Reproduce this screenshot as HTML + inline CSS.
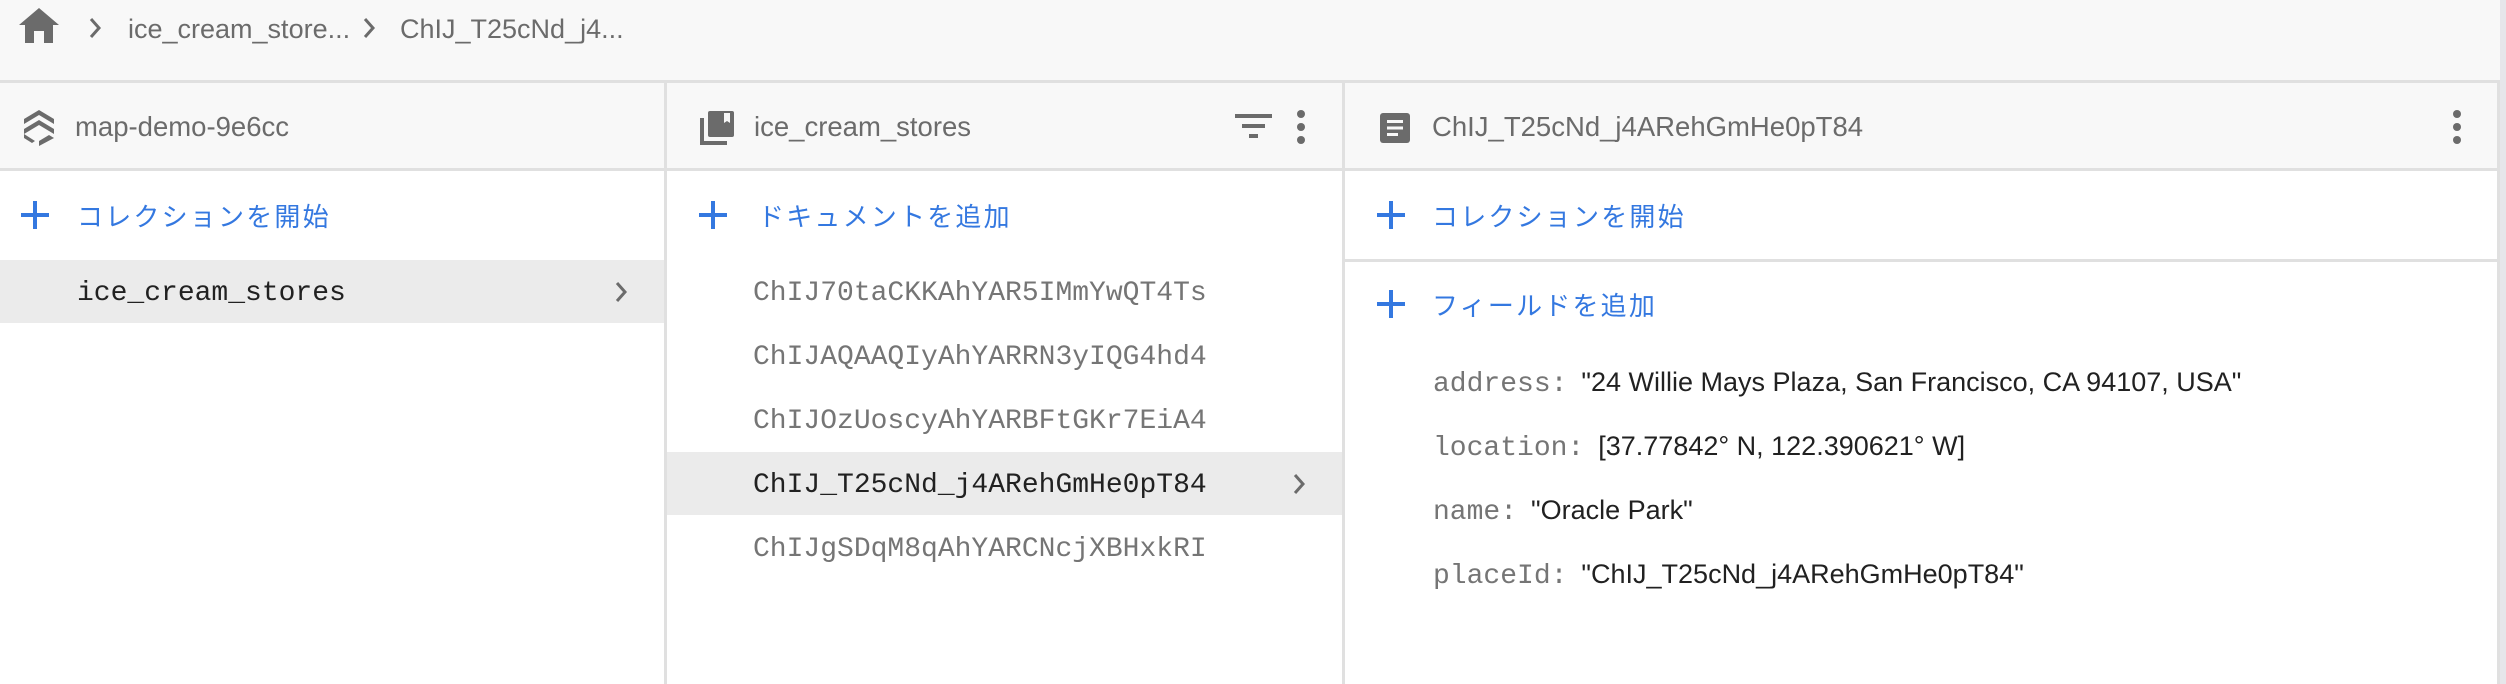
<!DOCTYPE html>
<html><head><meta charset="utf-8"><style>
*{margin:0;padding:0;box-sizing:border-box}
body{width:2506px;height:684px;overflow:hidden;background:#fff;font-family:"Liberation Sans","Noto Sans CJK JP",sans-serif;position:relative}
.a{position:absolute;white-space:nowrap}
.top{left:0;top:0;width:2500px;height:83px;background:#f8f8f8;border-bottom:3px solid #e0e0e0}
.hdr{top:83px;height:88px;background:#f8f8f8;border-bottom:3px solid #e0e0e0}
.vl{top:83px;width:3px;height:601px;background:#e0e0e0}
.gt{color:#6b6b6b;font-size:27.5px}
.blue{color:#3478e0;font-size:26px;letter-spacing:2.2px}
.mono{font-family:"Liberation Mono",monospace;font-size:28px}
.plus{width:28px;height:28px}
.plus:before{content:"";position:absolute;left:12px;top:0;width:4px;height:28px;background:#3478e0}
.plus:after{content:"";position:absolute;left:0;top:12px;width:28px;height:4px;background:#3478e0}
.sel{background:#ebebeb}
.key{color:#757575}
.val{color:#212121;font-family:"Liberation Sans",sans-serif;font-size:27px;margin-left:14px}
</style></head><body>
<div class="a top"></div>
<svg class="a" style="left:19px;top:8px" width="40" height="35" viewBox="0 0 40 35"><path d="M20 0 L40 17 H34 V35 H25 V23 H15 V35 H6 V17 H0 Z" fill="#6b6b6b"/></svg>
<svg class="a" style="left:88px;top:17px" width="14" height="22" viewBox="0 0 14 22"><path d="M3 2 L11 11 L3 20" stroke="#6b6b6b" stroke-width="3" fill="none"/></svg>
<div class="a gt" style="left:128px;top:14px;font-size:27px">ice_cream_store...</div>
<svg class="a" style="left:362px;top:17px" width="14" height="22" viewBox="0 0 14 22"><path d="M3 2 L11 11 L3 20" stroke="#6b6b6b" stroke-width="3" fill="none"/></svg>
<div class="a gt" style="left:400px;top:14px;font-size:27px">ChIJ_T25cNd_j4...</div>

<div class="a hdr" style="left:0;width:2497px"></div>
<div class="a" style="left:2497px;top:83px;width:3px;height:601px;background:#e0e0e0"></div>
<div class="a" style="left:2500px;top:0;width:6px;height:684px;background:#e6e6ea"></div>
<div class="a vl" style="left:664px"></div>
<div class="a vl" style="left:1342px"></div>

<svg class="a" style="left:23px;top:110px" width="32" height="36" viewBox="0 0 32 36"><path d="M16 0 L31 9 V14 L16 5 L1 14 V9Z M16 10 L31 19 V24 L16 15 L1 24 V19Z M31 28 L16 36 V31 L26 25Z M1 28 L9 33 L12 31 L1 24Z" fill="#6b6b6b"/></svg>
<div class="a gt" style="left:75px;top:111px">map-demo-9e6cc</div>
<svg class="a" style="left:700px;top:111px" width="34" height="34" viewBox="0 0 34 34"><path d="M0 7 H4 V30 H27 V34 H0Z" fill="#6b6b6b"/><rect x="8" y="0" width="26" height="26" rx="2" fill="#6b6b6b"/><path d="M24 2 V12 L27 10 L30 12 V2Z" fill="#f8f8f8"/></svg>
<div class="a gt" style="left:754px;top:111px">ice_cream_stores</div>
<svg class="a" style="left:1235px;top:114px" width="38" height="26" viewBox="0 0 38 26"><rect x="0" y="0" width="37" height="4" fill="#6b6b6b"/><rect x="7" y="10" width="23" height="4" fill="#6b6b6b"/><rect x="14" y="20" width="9" height="4" fill="#6b6b6b"/></svg>
<svg class="a" style="left:1295px;top:109px" width="12" height="36" viewBox="0 0 12 36"><circle cx="6" cy="5" r="4" fill="#6b6b6b"/><circle cx="6" cy="18" r="4" fill="#6b6b6b"/><circle cx="6" cy="31" r="4" fill="#6b6b6b"/></svg>
<svg class="a" style="left:1380px;top:113px" width="30" height="30" viewBox="0 0 30 30"><rect width="30" height="30" rx="3" fill="#6b6b6b"/><rect x="7" y="7" width="16" height="3" fill="#f8f8f8"/><rect x="7" y="13.5" width="16" height="3" fill="#f8f8f8"/><rect x="7" y="20" width="11" height="3" fill="#f8f8f8"/></svg>
<div class="a gt" style="left:1432px;top:111px">ChIJ_T25cNd_j4ARehGmHe0pT84</div>
<svg class="a" style="left:2451px;top:109px" width="12" height="36" viewBox="0 0 12 36"><circle cx="6" cy="5" r="4" fill="#6b6b6b"/><circle cx="6" cy="18" r="4" fill="#6b6b6b"/><circle cx="6" cy="31" r="4" fill="#6b6b6b"/></svg>

<div class="a plus" style="left:21px;top:201px"></div>
<div class="a blue" style="left:77px;top:197px">コレクションを開始</div>
<div class="a sel" style="left:0;top:260px;width:664px;height:63px"></div>
<div class="a mono" style="left:77px;top:278px;color:#212121">ice_cream_stores</div>
<svg class="a" style="left:614px;top:281px" width="14" height="22" viewBox="0 0 14 22"><path d="M3 2 L11 11 L3 20" stroke="#6b6b6b" stroke-width="3" fill="none"/></svg>

<div class="a plus" style="left:699px;top:201px"></div>
<div class="a blue" style="left:758px;top:197px">ドキュメントを追加</div>
<div class="a sel" style="left:667px;top:452px;width:675px;height:63px"></div>
<div class="a mono" style="left:753px;top:278px;color:#757575">ChIJ70taCKKAhYAR5IMmYwQT4Ts</div>
<div class="a mono" style="left:753px;top:342px;color:#757575">ChIJAQAAQIyAhYARRN3yIQG4hd4</div>
<div class="a mono" style="left:753px;top:406px;color:#757575">ChIJOzUoscyAhYARBFtGKr7EiA4</div>
<div class="a mono" style="left:753px;top:470px;color:#212121">ChIJ_T25cNd_j4ARehGmHe0pT84</div>
<div class="a mono" style="left:753px;top:534px;color:#757575">ChIJgSDqM8qAhYARCNcjXBHxkRI</div>
<svg class="a" style="left:1292px;top:473px" width="14" height="22" viewBox="0 0 14 22"><path d="M3 2 L11 11 L3 20" stroke="#6b6b6b" stroke-width="3" fill="none"/></svg>

<div class="a plus" style="left:1377px;top:201px"></div>
<div class="a blue" style="left:1432px;top:197px">コレクションを開始</div>
<div class="a" style="left:1345px;top:259px;width:1152px;height:3px;background:#e0e0e0"></div>
<div class="a plus" style="left:1377px;top:290px"></div>
<div class="a blue" style="left:1432px;top:286px">フィールドを追加</div>
<div class="a mono key" style="left:1433px;top:367px">address:<span class="val">"24 Willie Mays Plaza, San Francisco, CA 94107, USA"</span></div>
<div class="a mono key" style="left:1433px;top:431px">location:<span class="val">[37.77842° N, 122.390621° W]</span></div>
<div class="a mono key" style="left:1433px;top:495px">name:<span class="val">"Oracle Park"</span></div>
<div class="a mono key" style="left:1433px;top:559px">placeId:<span class="val">"ChIJ_T25cNd_j4ARehGmHe0pT84"</span></div>
</body></html>
